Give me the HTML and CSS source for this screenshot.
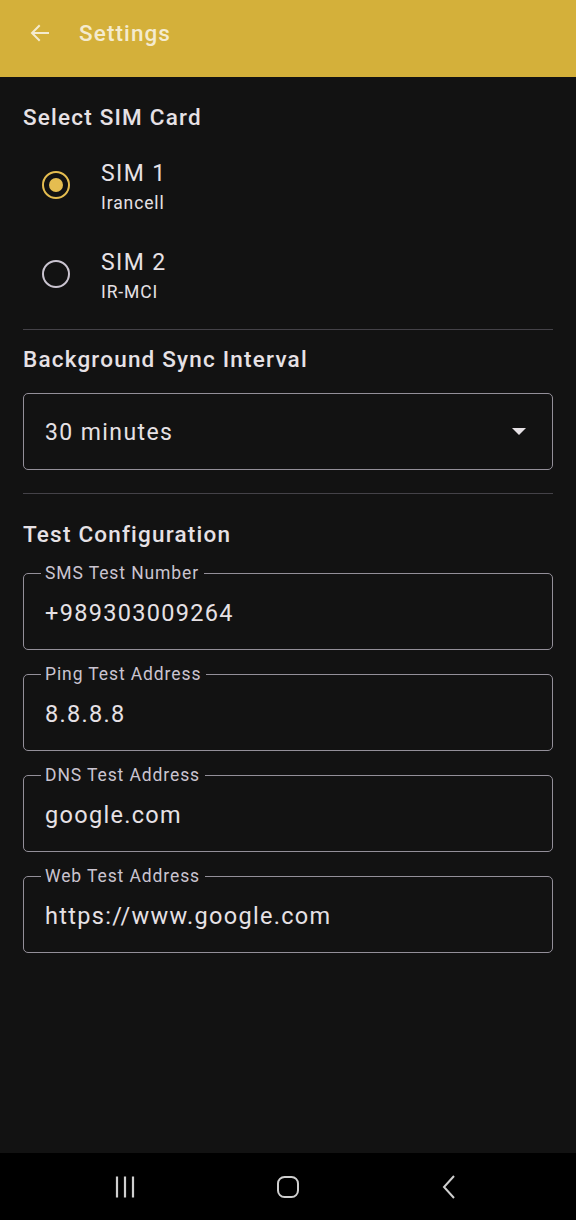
FILE: index.html
```html
<!DOCTYPE html>
<html lang="en">
<head>
<meta charset="utf-8">
<title>Settings</title>
<link rel="stylesheet" href="styles.css">
</head>
<body>
<div class="screen">
  <header class="appbar">
    <svg class="back" width="24" height="24" viewBox="0 0 24 24"><path d="M20 12H4.5M11 5l-7 7 7 7" fill="none" stroke="currentColor" stroke-width="2" stroke-linecap="square"/></svg>
    <h1 class="appbar-title">Settings</h1>
  </header>

  <main class="content">
    <h2 class="section-title">Select SIM Card</h2>
    <div class="radio-list">
      <div class="radio-row">
        <span class="radio radio-on"><span class="radio-dot"></span></span>
        <div class="radio-text">
          <div class="radio-label">SIM 1</div>
          <div class="radio-sub">Irancell</div>
        </div>
      </div>
      <div class="radio-row">
        <span class="radio radio-off"></span>
        <div class="radio-text">
          <div class="radio-label">SIM 2</div>
          <div class="radio-sub">IR-MCI</div>
        </div>
      </div>
    </div>

    <hr class="divider divider-1">

    <h2 class="section-title">Background Sync Interval</h2>
    <div class="dropdown">
      <span class="dropdown-value">30 minutes</span>
      <svg class="dropdown-arrow" width="14" height="8" viewBox="0 0 14 8"><path d="M0 0h14L7 7z" fill="#e6e1e5"/></svg>
    </div>

    <hr class="divider divider-2">

    <h2 class="section-title">Test Configuration</h2>
    <div class="fields">
      <fieldset class="field">
        <legend class="field-label">SMS Test Number</legend>
        <div class="field-value">+989303009264</div>
      </fieldset>
      <fieldset class="field">
        <legend class="field-label">Ping Test Address</legend>
        <div class="field-value">8.8.8.8</div>
      </fieldset>
      <fieldset class="field">
        <legend class="field-label">DNS Test Address</legend>
        <div class="field-value">google.com</div>
      </fieldset>
      <fieldset class="field">
        <legend class="field-label">Web Test Address</legend>
        <div class="field-value">https://www.google.com</div>
      </fieldset>
    </div>
  </main>

  <nav class="navbar">
    <svg class="nav-icon" width="24" height="24" viewBox="0 0 24 24"><path d="M3 1.5v21M11 1.5v21M19 1.5v21" stroke="#cfcfcf" stroke-width="2.2" fill="none"/></svg>
    <svg class="nav-icon" width="24" height="24" viewBox="0 0 24 24"><rect x="2" y="2" width="20" height="20" rx="6.5" stroke="#cfcfcf" stroke-width="2" fill="none"/></svg>
    <svg class="nav-icon" width="24" height="24" viewBox="0 0 24 24"><path d="M17 1L7 12l10 11" stroke="#cfcfcf" stroke-width="2" fill="none"/></svg>
  </nav>
</div>
</body>
</html>
```

FILE: styles.css
```css
* { box-sizing: border-box; }
html, body { margin: 0; padding: 0; }
body {
  background: #121212;
  font-family: Roboto, "Noto Sans", "Liberation Sans", sans-serif;
  color: #e6e1e5;
}
.screen {
  width: 576px;
  height: 1220px;
  display: flex;
  flex-direction: column;
  background: #121212;
}
.appbar {
  height: 77px;
  flex: none;
  background: #d4b03a;
  display: flex;
  align-items: center;
  padding-left: 28px;
  color: #f4ebcf;
  padding-bottom: 12px;
}
.back { display: block; }
.appbar-title {
  margin: 0 0 0 27px;
  font-size: 22.5px;
  font-weight: 500;
  color: #f4ebcf;
  letter-spacing: 1.1px;
}
.content {
  flex: 1;
  padding: 25px 23px 0;
}
.section-title {
  margin: 0;
  font-size: 22.5px;
  line-height: 30px;
  font-weight: 500;
  color: #e6e1e5;
  letter-spacing: 1.2px;
}
.radio-list {
  margin-top: 8px;
}
.radio-row {
  height: 89px;
  display: flex;
  align-items: center;
  padding-left: 19px;
}
.radio {
  width: 28px;
  height: 28px;
  border-radius: 50%;
  border: 2.8px solid #cac4d0;
  display: flex;
  align-items: center;
  justify-content: center;
  flex: none;
}
.radio-on { border-color: #e5bd50; }
.radio-dot {
  width: 14px;
  height: 14px;
  border-radius: 50%;
  background: #e5bd50;
}
.radio-text {
  margin-left: 31px;
  padding-top: 5px;
}
.radio-label {
  font-size: 23px;
  line-height: 26px;
  letter-spacing: 1.4px;
  color: #e6e1e5;
}
.radio-sub {
  margin-top: 5px;
  font-size: 17.5px;
  line-height: 22px;
  letter-spacing: 0.9px;
  color: #e6e1e5;
}
.divider {
  border: 0;
  height: 1px;
  background: #444248;
  margin: 0;
}
.divider-1 { margin-top: 11px; margin-bottom: 14px; }
.dropdown {
  margin-top: 19px;
  height: 77px;
  border: 1.5px solid #938f99;
  border-radius: 5px;
  display: flex;
  align-items: center;
  justify-content: space-between;
  padding: 2px 26px 0 21px;
}
.dropdown-value {
  font-size: 23px;
  letter-spacing: 1.4px;
  color: #e6e1e5;
}
.dropdown-arrow { display: block; margin-top: -1px; }
.divider-2 { margin-top: 23px; margin-bottom: 25px; }
.fields {
  margin-top: 14px;
  display: flex;
  flex-direction: column;
  gap: 14px;
}
.field {
  margin: 0;
  min-width: 0;
  height: 87px;
  border: 1.5px solid #938f99;
  border-radius: 5px;
  padding: 0 21px;
}
.field-label {
  margin-left: -4px;
  padding: 0 5px 0 4px;
  font-size: 17.5px;
  line-height: 20px;
  letter-spacing: 0.9px;
  color: #cac4d0;
}
.field-value {
  padding-top: 16px;
  font-size: 23.5px;
  line-height: 28px;
  letter-spacing: 1.3px;
  color: #e6e1e5;
}
.navbar {
  height: 67px;
  flex: none;
  background: #000;
  display: flex;
  align-items: center;
  justify-content: space-between;
  padding: 0 115px 0 114px;
}
.nav-icon { display: block; }
```
